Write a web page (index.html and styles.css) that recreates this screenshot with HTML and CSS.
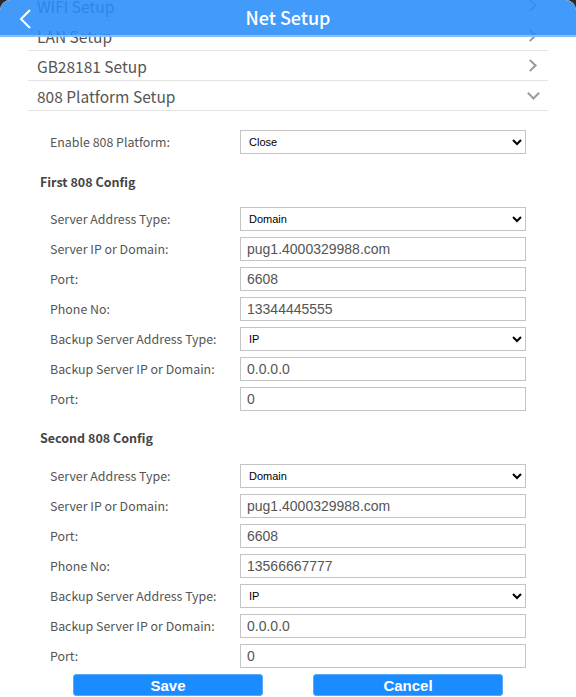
FILE: index.html
```html
<!DOCTYPE html>
<html lang="en">
<head>
    <meta charset="UTF-8">
    <meta name="viewport" content="width=device-width, initial-scale=1.0">
    <title>Net Setup</title>
    <link rel="stylesheet" href="styles.css">
</head>
<body>
    <div class="app">
        <header class="topbar">
            <svg class="back" width="14" height="22" viewBox="0 0 14 22">
                <polyline points="11,2 2,11 11,20" fill="none" stroke="#fff" stroke-width="2"/>
            </svg>
            <h1>Net Setup</h1>
        </header>

        <ul class="menu">
            <li>WIFI Setup <span class="arrow right"></span></li>
            <li>LAN Setup <span class="arrow right"></span></li>
            <li>GB28181 Setup <span class="arrow right"></span></li>
            <li>808 Platform Setup <span class="arrow down"></span></li>
        </ul>

        <form class="config">
            <div class="row first">
                <label>Enable 808 Platform:</label>
                <select><option>Close</option><option>Open</option></select>
            </div>

            <h2>First 808 Config</h2>
            <div class="row">
                <label>Server Address Type:</label>
                <select><option>Domain</option><option>IP</option></select>
            </div>
            <div class="row">
                <label>Server IP or Domain:</label>
                <input type="text" value="pug1.4000329988.com">
            </div>
            <div class="row">
                <label>Port:</label>
                <input type="text" value="6608">
            </div>
            <div class="row">
                <label>Phone No:</label>
                <input type="text" value="13344445555">
            </div>
            <div class="row">
                <label>Backup Server Address Type:</label>
                <select><option>IP</option><option>Domain</option></select>
            </div>
            <div class="row">
                <label>Backup Server IP or Domain:</label>
                <input type="text" value="0.0.0.0">
            </div>
            <div class="row">
                <label>Port:</label>
                <input type="text" value="0">
            </div>

            <h2 class="second">Second 808 Config</h2>
            <div class="row">
                <label>Server Address Type:</label>
                <select><option>Domain</option><option>IP</option></select>
            </div>
            <div class="row">
                <label>Server IP or Domain:</label>
                <input type="text" value="pug1.4000329988.com">
            </div>
            <div class="row">
                <label>Port:</label>
                <input type="text" value="6608">
            </div>
            <div class="row">
                <label>Phone No:</label>
                <input type="text" value="13566667777">
            </div>
            <div class="row">
                <label>Backup Server Address Type:</label>
                <select><option>IP</option><option>Domain</option></select>
            </div>
            <div class="row">
                <label>Backup Server IP or Domain:</label>
                <input type="text" value="0.0.0.0">
            </div>
            <div class="row">
                <label>Port:</label>
                <input type="text" value="0">
            </div>

            <div class="buttons">
                <button type="submit">Save</button>
                <button type="button">Cancel</button>
            </div>
        </form>
    </div>
</body>
</html>
```

FILE: styles.css
```css
html {
    background: #2a2a2a;
}

body {
    margin: 0;
    font-family: "Noto Sans CJK SC", "Noto Sans", sans-serif;
    color: #555;
}

.app {
    background: #fff;
    border-radius: 10px 10px 0 0;
    height: 697px;
    overflow: hidden;
    position: relative;
}

.topbar {
    position: absolute;
    top: 0;
    left: 0;
    right: 0;
    height: 35px;
    background: rgba(40, 140, 250, 0.88);
    border-bottom: 2px solid rgba(150, 200, 250, 0.85);
    border-radius: 10px 10px 0 0;
    display: flex;
    align-items: center;
    justify-content: center;
    z-index: 2;
}

.topbar h1 {
    margin: 0;
    color: #fff;
    font-size: 18px;
    font-weight: 500;
    line-height: 35px;
}

.back {
    position: absolute;
    left: 19px;
    top: 8px;
}

.menu {
    list-style: none;
    margin: -9px 28px 0 28px;
    padding: 0;
}

.menu li {
    height: 29px;
    border-bottom: 1px solid #e4e4e4;
    display: flex;
    align-items: center;
    justify-content: space-between;
    padding: 0 10px 0 9px;
    font-size: 15.5px;
    color: #555;
}

.arrow {
    width: 7px;
    height: 7px;
    border-right: 2.5px solid #999;
    border-bottom: 2.5px solid #999;
}

.arrow.right {
    transform: rotate(-45deg);
    margin-right: 3px;
}

.arrow.down {
    transform: rotate(45deg);
    margin-top: -4px;
}

.config {
    padding-top: 16px;
}

.row {
    display: flex;
    align-items: center;
    height: 30px;
    padding-left: 50px;
}

.row.first {
    margin-bottom: 15px;
}

.row label {
    width: 190px;
    font-size: 12.4px;
    color: #555;
}

.row input,
.row select {
    box-sizing: border-box;
    width: 286px;
    height: 24px;
    border: 1px solid #c4c4c4;
    border-radius: 0;
    background: #fff;
    margin: 0;
}

.row input {
    font-family: "Liberation Sans", Arial, sans-serif;
    font-size: 14px;
    color: #555;
    padding: 0 6px;
}

.row select {
    font-family: "Liberation Sans", Arial, sans-serif;
    font-size: 11px;
    color: #000;
    padding: 0 4px;
}

h2 {
    margin: 0 0 12px 40px;
    font-size: 12.5px;
    font-weight: bold;
    line-height: 20px;
    color: #444;
}

h2.second {
    margin-top: 14px;
    margin-bottom: 13px;
}

.buttons {
    display: flex;
    justify-content: center;
    gap: 50px;
    margin-top: 3px;
}

.buttons button {
    width: 190px;
    height: 22px;
    background: #1a8cff;
    border: 1px solid #5aa9f5;
    border-radius: 3px;
    color: #fff;
    font-family: "Liberation Sans", Arial, sans-serif;
    font-size: 15px;
    font-weight: bold;
    padding: 0;
    cursor: pointer;
}
```
